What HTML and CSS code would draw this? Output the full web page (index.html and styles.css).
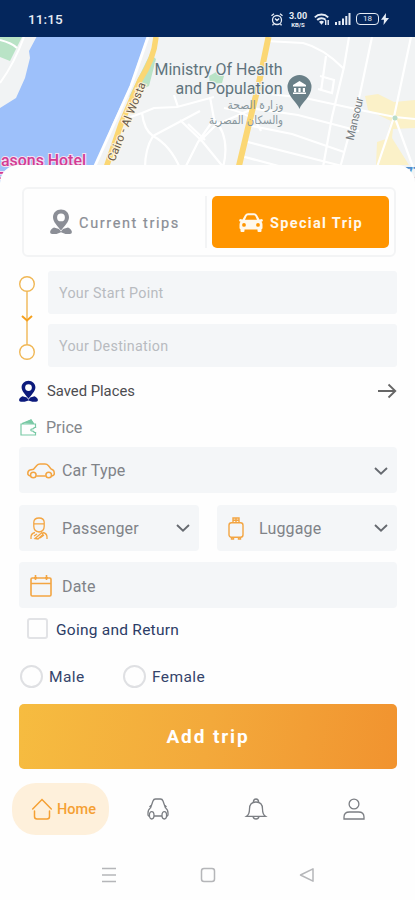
FILE: index.html
```html
<!DOCTYPE html>
<html lang="en">
<head>
<meta charset="utf-8">
<title>Special Trip</title>
<link rel="stylesheet" href="styles.css">
</head>
<body>
<svg class="defs" width="0" height="0">
  <symbol id="place" viewBox="0 0 22 26">
    <path fill-rule="evenodd" d="M11 .5c4.600 0 8 3.400 8 7.700 0 4.800-4.800 8.800-8 13.300C7.800 17 3 13 3 8.200 3 3.900 6.400.5 11 .5zm0 4a3.900 3.900 0 1 0 0 7.800 3.900 3.900 0 0 0 0-7.800z"/>
    <path d="M4 18.500l5 1.500 2 2.500 2-2.500 5-1.500c2.200.9 3.300 2.200 3.800 3.900.3 1.400-.5 2.600-2 2.600h-4.300L11 23.300 6.500 25H2.200C.7 25-.1 23.800.2 22.400c.5-1.700 1.600-3 3.800-3.900z"/>
  </symbol>
  <symbol id="chevron" viewBox="0 0 14 8"><path d="M1 1l6 5.600L13 1" fill="none" stroke="currentColor" stroke-width="1.900"/></symbol>
</svg>
<div class="screen">
  <header class="status">
    <span class="clock">11:15</span>
    <div class="indicators">
      <svg width="12" height="13" viewBox="0 0 12 13" fill="none" stroke="currentColor" stroke-width="1.300"><circle cx="6" cy="7" r="4.500"/><path d="M.5 2.800L3 .8M11.500 2.800L9 .8M4 5.500l2 2 2.200-2M2.500 11l-1 1.300M9.500 11l1 1.300"/></svg>
      <span class="speed"><b>3.00</b><small>KB/S</small></span>
      <svg width="16" height="13" viewBox="0 0 16 13" fill="none" stroke="currentColor"><path d="M.8 4.300a9.500 9.500 0 0 1 13.400 0M3.200 7a6 6 0 0 1 8.300-.2" stroke-width="1.900"/><path d="M5 8.700a4 4 0 0 1 5 0l-2.500 3z" fill="currentColor" stroke="none"/><path d="M11.700 7v5M14.200 7v5" stroke-width="1.400"/></svg>
      <svg width="16" height="12" viewBox="0 0 16 12" fill="currentColor"><path d="M0 9h2v3H0zM3.500 8h2v4h-2zM7 5.500h2V12H7zM10.300 3h2v9h-2zM13.500 0h2v12h-2z"/></svg>
      <span class="battery"><i>18</i></span>
      <svg class="bolt" width="8" height="12" viewBox="0 0 8 12" fill="currentColor"><path d="M5 0L0 6.700h3L2.500 12 8 5H4.800z"/></svg>
    </div>
  </header>

  <svg class="map" width="415" height="150" viewBox="0 37 415 150">
    <rect y="37" width="415" height="150" fill="#f1f3f4"/>
    <path d="M0 37h22L10 61 0 57z" fill="#b9e3c6"/>
    <path d="M0 40q12 3 17 8M24 37Q14 64 0 83" fill="none" stroke="#fff" stroke-width="2"/>
    <path d="M36.500 37H147L130 86 113 123 94 168 92 187H0V108L16 98 25 78 30 58 29 51z" fill="#9dc0fa"/>
    <path d="M150 54l6 5-7 27-11 5-9 6z" fill="#b9e3c6"/>
    <path d="M148 37l-17 49-18 40-19 42" fill="none" stroke="#fff" stroke-width="3"/>
    <path d="M156 37q-2 22-16 43l-19 44-15 44" fill="none" stroke="#fbd774" stroke-width="5.500"/>
    <path d="M209 76l9-5 6 5-2 7-12 1z" fill="#b9e3c6"/>
    <path d="M365 96l13-2 16 8 21-2v28l-22 1-1 9 17 27h-33l1-23 9-3 5-18-23-11zM378 166l7-15 7-14 7 29z" fill="#fbf1c8"/>
    <g fill="none" stroke="#fff" stroke-width="2.200">
      <path d="M125 119l17-6 12-5 23-1 37-10M142 113q2 17 11 23l47-25M178 107l-4-12M145 168q0-19 8-32 17 9 27 32M180 120l22 21 22 27M185 168l13-26 16-23-4-22M205 140l-17-16M224 108q30 5 37 23M213 118q18 18 10 50M200 141l16-16 34-15"/>
      <path d="M266 41q17 1 37 2 20 5 40 25M349 37l-5 30-12 50-9 50M372 37l-12 57-20 74M411 37l-17 80-17 50M253 92l52 6 60 13 30 6 20 2M250 108l48 7 61 16M247 125l45 9 52 18M244 141l98 25M241 156l45 12M395 118l18 49M326 56l-5 35M320 76l14 4-2 13-14-4"/>
    </g>
    <path d="M268.500 37l-10 48-11 45-9 38" fill="none" stroke="#fbd774" stroke-width="6"/>
    <circle cx="395" cy="118" r="2.500" fill="#b9dcc9"/>
    <g class="place-name">
      <text x="154.500" y="74.500" textLength="128" lengthAdjust="spacingAndGlyphs">Ministry Of Health</text>
      <text x="175.500" y="94" textLength="107" lengthAdjust="spacingAndGlyphs">and Population</text>
    </g>
    <g class="place-arabic">
      <text x="227.500" y="109" textLength="56" lengthAdjust="spacingAndGlyphs">وزارة الصحة</text>
      <text x="209" y="124" textLength="74" lengthAdjust="spacingAndGlyphs">والسكان المصرية</text>
    </g>
    <path d="M299.500 109c-1.500-6-12-12-12-22a12 12 0 0 1 24 0c0 10-10.500 16-12 22z" fill="#6a8088"/>
    <path d="M293 85l6.500-4 6.500 4v1.500h-13zM294 88h2.200v4H294zm4.400 0h2.200v4h-2.200zm4.400 0h2.200v4h-2.200zM293 92.500h13V94h-13z" fill="#fff"/>
    <text class="road" transform="translate(114.500 162) rotate(-68)" textLength="84">Cairo - Al Wosta</text>
    <text class="street" transform="translate(353.500 141) rotate(-77)" textLength="44">Mansour</text>
    <text class="hotel" x="1" y="166" textLength="85" lengthAdjust="spacingAndGlyphs">asons Hotel</text>
    <text class="hotel" x="-5" y="184">F</text>
    <text class="metro" x="405" y="178">77</text>
  </svg>

  <main class="sheet">
    <div class="tabs">
      <div class="tab">
        <svg width="22" height="26" fill="currentColor"><use href="#place"/></svg>
        <span>Current trips</span>
      </div>
      <div class="tab tab-active">
        <svg width="26" height="19" viewBox="0 0 26 19" fill="currentColor"><path fill-rule="evenodd" d="M4.500 6.500L7 2q1-1.700 3-1.700h6q2 0 3 1.700l2.500 4.500 2.700-.5.800 2-1.500.8q1 1 1 3V15q0 1-1 1.200V18q0 1-1 1h-2q-1 0-1-1v-1.500h-13V18q0 1-1 1h-2q-1 0-1-1v-1.800Q1.500 16 1.500 15v-3.200q0-2 1-3L1 8l.8-2zM8.700 3L7 6.800h12L17.300 3q-.4-.7-1.300-.7h-6q-.9 0-1.300.7zM6 10a1.900 1.900 0 1 0 0 3.800A1.900 1.900 0 0 0 6 10zm14 0a1.900 1.900 0 1 0 0 3.800 1.900 1.900 0 0 0 0-3.800z"/></svg>
        <span>Special Trip</span>
      </div>
    </div>

    <section class="route">
      <svg width="18" height="86" viewBox="0 0 18 86" fill="none" stroke="#f0b755" stroke-width="1.400"><circle cx="9" cy="9" r="7.300"/><circle cx="9" cy="77" r="7.300"/><path d="M9 16.500v53"/><path d="M4 41l5 4.500 5-4.500" stroke="#f5a01d" stroke-width="2"/></svg>
      <div class="points">
        <div class="point">Your Start Point</div>
        <div class="point">Your Destination</div>
      </div>
    </section>

    <div class="line saved">
      <svg width="19" height="23" fill="#0c1a7c"><use href="#place"/></svg>
      <span>Saved Places</span>
      <svg class="end" width="20" height="16" viewBox="0 0 20 16" fill="none" stroke="#666" stroke-width="1.800"><path d="M1 8h17M11.500 1.500L18.300 8l-6.800 6.500"/></svg>
    </div>
    <div class="line price">
      <svg width="17" height="17" viewBox="0 0 17 17" fill="none" stroke="#79c9a5" stroke-width="1.200"><path d="M15.500 8V5H1v11h14.500v-2.500M16.200 8.500h-2q0 1.300-1.500 1.300-2 0-2 1.200t2 1.200q1.500 0 1.500 1.300h2M2 4.500L11 1l2.500 3.500"/><path d="M5.500 3.700L11 1l2 3.200z" fill="#79c9a5"/></svg>
      <span>Price</span>
    </div>

    <div class="field car-type">
      <svg width="28" height="16" viewBox="0 0 28 16" fill="none" stroke="#f3a542" stroke-width="1.500"><path d="M3.500 13Q.8 12.500.8 10.500.8 7.500 3 7l3.500-.7L10 2.300Q11 1 13 1h5q2 0 3.500 1.700L24 6l2 1q1.300.7 1.300 3.500 0 2-2.500 2.500M9.300 13h9.400"/><circle cx="6.300" cy="12" r="2.800"/><circle cx="21.700" cy="12" r="2.800"/></svg>
      <span>Car Type</span>
      <svg class="end" width="14" height="8"><use href="#chevron"/></svg>
    </div>
    <div class="pair">
      <div class="field passenger">
        <svg width="18" height="23" viewBox="0 0 18 23" fill="none" stroke="#f3a542" stroke-width="1.300"><path d="M3.800 6.500V5.200Q4 1 9 1t5.200 4.200v4q0 5-5.200 5.800-5.200-.8-5.200-5.800zM3.800 6.800h10.400M1 22v-2q0-3.500 4-4.500M17 22v-2q0-3.500-4-4.500M5 21.500l7-6 1 2-5 4.500zM10 21l4-3M4 19l3-2"/></svg>
        <span>Passenger</span>
        <svg class="end" width="14" height="8"><use href="#chevron"/></svg>
      </div>
      <div class="field luggage">
        <svg width="16" height="23" viewBox="0 0 16 23" fill="none" stroke="#f3a542" stroke-width="1.400"><rect x="1" y="5.700" width="14" height="14.500" rx="2.500"/><path d="M5 5.500V1h6v4.500M8 1v4.500M5 3.200h6M3.500 20v2h2v-2M10.500 20v2h2v-2"/></svg>
        <span>Luggage</span>
        <svg class="end" width="14" height="8"><use href="#chevron"/></svg>
      </div>
    </div>
    <div class="field date">
      <svg width="22" height="22" viewBox="0 0 22 22" fill="none" stroke="#f3a542" stroke-width="1.600"><rect x="1" y="3" width="20" height="18" rx="1.200"/><path d="M1 8.500h20M5.500 0v5M16.500 0v5M4 2.800h3M15 2.800h3"/></svg>
      <span>Date</span>
    </div>

    <div class="check"><i class="box"></i><span>Going and Return</span></div>
    <div class="radios">
      <div class="radio"><i class="ring"></i><span>Male</span></div>
      <div class="radio"><i class="ring"></i><span>Female</span></div>
    </div>
    <div class="submit">Add trip</div>
  </main>

  <nav class="tabbar">
    <div class="home">
      <svg width="20" height="22" viewBox="0 0 20 22" fill="none" stroke="currentColor" stroke-width="1.500"><path d="M.7 11L10 1.500 19.300 11M2.500 13v5.500q0 2.500 2.500 2.500h10q2.500 0 2.500-2.500V13" stroke-linecap="round"/></svg>
      <span>Home</span>
    </div>
    <div class="item"><svg width="22" height="22" viewBox="0 0 22 22"><path d="M3.500 10L6 3q.7-2 2.500-2h5q1.800 0 2.500 2l2.500 7M4 7.500L2.500 9M18 7.500L19.500 9M3.500 10Q1 11.500 1 15v2l1 1.500M18.500 10q2.500 1.500 2.500 5v2l-1 1.500M7 18h8"/><ellipse cx="4.700" cy="17.300" rx="2.300" ry="3.700"/><ellipse cx="17.300" cy="17.300" rx="2.300" ry="3.700"/></svg></div>
    <div class="item"><svg width="20" height="22" viewBox="0 0 20 22"><path d="M.5 18.300q3-2 3-7.300 0-7 6.500-7t6.500 7q0 5.300 3 7.300zM7.300 4.300Q7.500 1 10 1t2.700 3.300M7 18.500q.5 2.500 3 2.500t3-2.500"/></svg></div>
    <div class="item"><svg width="22" height="22" viewBox="0 0 22 22"><circle cx="11" cy="6" r="4.900"/><path d="M1 21v-2q0-5 5.500-5h9q5.500 0 5.500 5v2z"/></svg></div>
  </nav>

  <footer class="system">
    <svg width="16" height="16" viewBox="0 0 16 16"><path d="M1 1.500h14M1 8h14M1 14.500h14"/></svg>
    <svg width="16" height="16" viewBox="0 0 16 16"><rect x="1.500" y="1.500" width="13" height="13" rx="2.500"/></svg>
    <svg width="16" height="16" viewBox="0 0 16 16"><path d="M14 1.800v12.400L1.500 8z" stroke-linejoin="round"/></svg>
  </footer>
</div>
</body>
</html>
```

FILE: styles.css
```css
* { box-sizing: border-box; }
body { margin: 0; background: #fff; font-family: Roboto, "Noto Sans", sans-serif; }
svg { display: block; flex: none; overflow: visible; }
i { font-style: normal; }
.defs { position: absolute; }
.screen { width: 415px; height: 900px; overflow: hidden; display: flex; flex-direction: column; background: #fefefe; }

.status { height: 37px; flex: none; background: #04265c; color: #e6ecf5; display: flex; justify-content: space-between; align-items: center; padding: 1px 26px 0 28px; }
.clock { font-size: 13.5px; font-weight: 500; letter-spacing: .1px; }
.indicators { display: flex; align-items: center; gap: 5px; }
.speed { display: flex; flex-direction: column; width: 20px; margin: 0 1px 0 0; align-items: center; font-size: 9px; line-height: 10px; }
.speed small { font-size: 6px; line-height: 7px; font-weight: 700; }
.battery { width: 23px; height: 12px; border: 1.5px solid currentColor; border-radius: 4px; font-size: 8px; line-height: 9px; text-align: center; }
.bolt { margin-left: -3px; }

.map { width: 415px; height: 150px; overflow: hidden; }
.place-name { font-size: 16px; fill: #5f747d; stroke: #f1f3f4; stroke-width: 2px; paint-order: stroke; }
.place-arabic { font-family: "DejaVu Sans", sans-serif; font-size: 11.5px; fill: #87969c; }
.road { font-size: 11.5px; fill: #66574a; stroke: #fdf3d9; stroke-width: 2px; paint-order: stroke; }
.street { font-size: 11.5px; fill: #757b80; }
.hotel { font-size: 16px; font-weight: 500; fill: #d33b93; stroke: #f4e2f2; stroke-width: 2px; paint-order: stroke; }
.metro { font-size: 14px; font-weight: 700; fill: #4d8fd0; }

.sheet { position: relative; margin-top: -22px; height: 618px; flex: none; background: #fefefe; border-radius: 18px 18px 0 0; padding: 22px 18px 0 19px; display: flex; flex-direction: column; }
.tabs { height: 70px; margin: 0 1px 0 3px; border: 2px solid #f3f4f5; border-radius: 6px; display: flex; padding: 7px 5px 7px 0; flex: none; }
.tab { flex: 1; display: flex; align-items: center; justify-content: center; gap: 7px; color: #8b8e96; font-size: 14.5px; letter-spacing: 1.6px; border-right: 2px solid #f3f4f5; margin-right: 5px; white-space: nowrap; font-weight: 400; -webkit-text-stroke: .2px currentColor; }
.tab span { margin: 2px -1px 0 0; }
.tab-active { flex: none; width: 177px; margin: 0; border: 0; border-radius: 5px; background: #ff9500; color: #fff8ec; gap: 6px; letter-spacing: 1.35px; font-weight: 700; -webkit-text-stroke: 0; }
.tab-active svg { margin-left: -1px; }

.route { display: flex; gap: 12px; margin: 14px 0 0 -1px; flex: none; }
.route > svg { margin: 4px 0 -4px; }
.points { flex: 1; display: grid; gap: 10px; }
.point { height: 43px; background: #f4f6f8; border-radius: 3px; padding-left: 11px; display: flex; align-items: center; color: #b8bbc0; font-size: 14.3px; letter-spacing: .28px; }

.line { display: flex; align-items: center; flex: none; }
.end { margin-left: auto; color: #666a70; }
.saved { height: 30px; margin-top: 9px; gap: 9px; font-size: 14.8px; color: #4c4c50; }
.price { height: 30px; margin-top: 6px; gap: 9px; padding-left: 1px; font-size: 16px; color: #84878c; }

.field { height: 46px; background: #f4f6f8; border-radius: 4px; display: flex; align-items: center; flex: none; color: #808388; font-size: 16px; letter-spacing: .15px; padding-right: 9px; }
.car-type { margin-top: 5px; padding-left: 8px; gap: 7px; padding-top: 1px; }
.pair { margin-top: 12px; display: grid; grid-template-columns: 180px 180px; justify-content: space-between; flex: none; }
.passenger { padding-left: 11px; gap: 14px; }
.luggage { padding-left: 11px; gap: 15px; }
.date { margin-top: 11px; padding-left: 11px; gap: 10px; padding-top: 2px; }

.check { display: flex; align-items: center; gap: 8px; margin: 10px 0 0 8px; height: 21px; color: #2c3c66; font-size: 15.5px; letter-spacing: .25px; flex: none; }
.check span { margin-top: 2px; }
.box { width: 21px; height: 21px; border: 2px solid #e2e3e6; border-radius: 3px; }
.radios { display: grid; grid-template-columns: 103px 1fr; margin: 26px 0 0 1px; height: 23px; flex: none; }
.radio { display: flex; align-items: center; gap: 6px; color: #35446b; font-size: 15.5px; letter-spacing: .4px; }
.ring { width: 23px; height: 23px; border: 2px solid #dfe0e3; border-radius: 50%; }
.submit { height: 65px; margin-top: 16px; flex: none; border-radius: 5px; background: linear-gradient(100deg, #f6bc40, #f3a93b 50%, #f1932f); color: #fff; display: flex; align-items: center; justify-content: center; font-size: 19px; font-weight: 700; letter-spacing: 1.9px; }

.tabbar { height: 52px; flex: none; display: grid; grid-template-columns: 97px 98px 98px 98px; padding-left: 12px; }
.home { background: #fef0db; border-radius: 24px; color: #f5a033; display: flex; align-items: center; padding-left: 20px; gap: 5px; font-size: 14.5px; font-weight: 500; }
.item { display: flex; align-items: center; justify-content: center; fill: none; stroke: #7b7e83; stroke-width: 1.3; }
.system { margin-top: 32px; height: 16px; display: flex; justify-content: space-between; padding: 0 100px 0 101px; fill: none; stroke: #b5b6b9; stroke-width: 1.5; }
```
